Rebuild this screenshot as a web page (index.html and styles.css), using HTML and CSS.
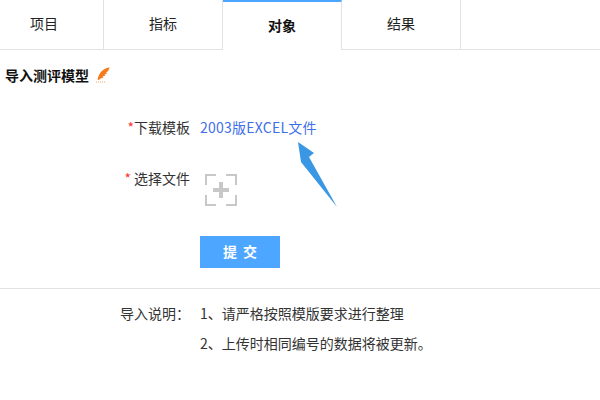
FILE: index.html
```html
<!DOCTYPE html>
<html lang="zh-CN">
<head>
    <meta charset="UTF-8">
    <title>导入测评模型</title>
    <link rel="stylesheet" href="styles.css">
</head>
<body>
    <nav class="tabs">
        <a class="tab tab-first">项目</a>
        <a class="tab">指标</a>
        <a class="tab active">对象</a>
        <a class="tab">结果</a>
    </nav>
    <h2 class="title">导入测评模型
        <svg class="feather" width="14" height="16" viewBox="0 0 14 16">
            <path d="M13.500 0.500C8 1 3.500 4.500 1.500 12.500L3 13C4 11.500 5.500 11 7.500 10.500L6.500 9.500L9.500 8.500L8.500 7.500L11 6.500L10 5.500C12 4.500 13 3 13.500 0.500Z" fill="#f47a1c"/>
            <path d="M0 15H10" stroke="#f9a35f" stroke-width="1" stroke-dasharray="1 1"/>
        </svg>
    </h2>
    <div class="form">
        <div class="row row-download">
            <label class="label"><i class="star">*</i>下载模板</label>
            <a class="link">2003版EXCEL文件</a>
        </div>
        <div class="row row-file">
            <label class="label"><i class="star star-gap">*</i>选择文件</label>
            <div class="picker">
                <span class="plus"></span>
            </div>
        </div>
        <div class="row row-submit">
            <button class="submit">提 交</button>
        </div>
    </div>
    <div class="notes">
        <div class="row row-note">
            <span class="label">导入说明：</span>
            <span>1、请严格按照模版要求进行整理</span>
        </div>
        <div class="row row-note">
            <span class="label"></span>
            <span>2、上传时相同编号的数据将被更新。</span>
        </div>
    </div>
    <svg class="arrow" width="50" height="75" viewBox="0 0 50 75">
        <path d="M6 7L22 18L17 22L45 72L9 27Z" fill="#3a97e4"/>
    </svg>
</body>
</html>
```

FILE: styles.css
```css
body {
    margin: 0;
    background: #fff;
    color: #333;
    font-family: "Noto Sans CJK SC", "Liberation Sans", sans-serif;
    font-size: 14px;
    overflow: hidden;
}
.tabs {
    display: flex;
    height: 50px;
    box-sizing: border-box;
    border-bottom: 1px solid #e2e2e2;
}
.tab {
    width: 119px;
    height: 49px;
    box-sizing: border-box;
    border-right: 1px solid #e2e2e2;
    color: #222;
    line-height: 47px;
    text-align: center;
}
.tab-first {
    width: 104px;
    padding-left: 15px;
    padding-right: 30px;
}
.active {
    height: 50px;
    border-top: 2px solid #4da6ff;
    background: #fff;
    color: #111;
    font-weight: bold;
    line-height: 46px;
}
.title {
    display: flex;
    align-items: center;
    gap: 7px;
    margin: 15px 0 0 5px;
    color: #111;
    font-size: 14px;
    font-weight: bold;
    line-height: 20px;
}
.form {
    padding-top: 32px;
}
.row {
    display: flex;
}
.label {
    width: 200px;
    padding-right: 10px;
    box-sizing: border-box;
    text-align: right;
}
.star {
    color: #f33;
    font-style: normal;
}
.star-gap {
    margin-right: 3px;
}
.row-download {
    line-height: 20px;
}
.link {
    color: #3f6fe8;
    letter-spacing: 0.25px;
}
.row-file {
    margin-top: 31px;
    line-height: 20px;
}
.picker {
    position: relative;
    width: 32px;
    height: 32px;
    margin: 6px 0 0 5px;
    background:
        linear-gradient(#c8c8c8, #c8c8c8) 0 0 / 11px 2px no-repeat,
        linear-gradient(#c8c8c8, #c8c8c8) 0 0 / 2px 11px no-repeat,
        linear-gradient(#c8c8c8, #c8c8c8) 100% 0 / 11px 2px no-repeat,
        linear-gradient(#c8c8c8, #c8c8c8) 100% 0 / 2px 11px no-repeat,
        linear-gradient(#c8c8c8, #c8c8c8) 0 100% / 11px 2px no-repeat,
        linear-gradient(#c8c8c8, #c8c8c8) 0 100% / 2px 11px no-repeat,
        linear-gradient(#c8c8c8, #c8c8c8) 100% 100% / 11px 2px no-repeat,
        linear-gradient(#c8c8c8, #c8c8c8) 100% 100% / 2px 11px no-repeat;
}
.plus {
    position: absolute;
    left: 8px;
    top: 8px;
    width: 16px;
    height: 16px;
    background:
        linear-gradient(#c8c8c8, #c8c8c8) 50% 50% / 16px 4px no-repeat,
        linear-gradient(#c8c8c8, #c8c8c8) 50% 50% / 4px 16px no-repeat;
}
.row-submit {
    margin-top: 30px;
    padding-left: 200px;
}
.submit {
    width: 80px;
    height: 32px;
    padding-bottom: 3px;
    border: none;
    background: #4da6ff;
    color: #fff;
    font-family: inherit;
    font-size: 14px;
    font-weight: bold;
    word-spacing: 3px;
}
.notes {
    margin-top: 20px;
    padding-top: 14px;
    border-top: 1px solid #e2e2e2;
}
.row-note {
    height: 20px;
    margin-bottom: 10px;
    line-height: 20px;
}
.arrow {
    position: absolute;
    left: 292px;
    top: 135px;
}
```
